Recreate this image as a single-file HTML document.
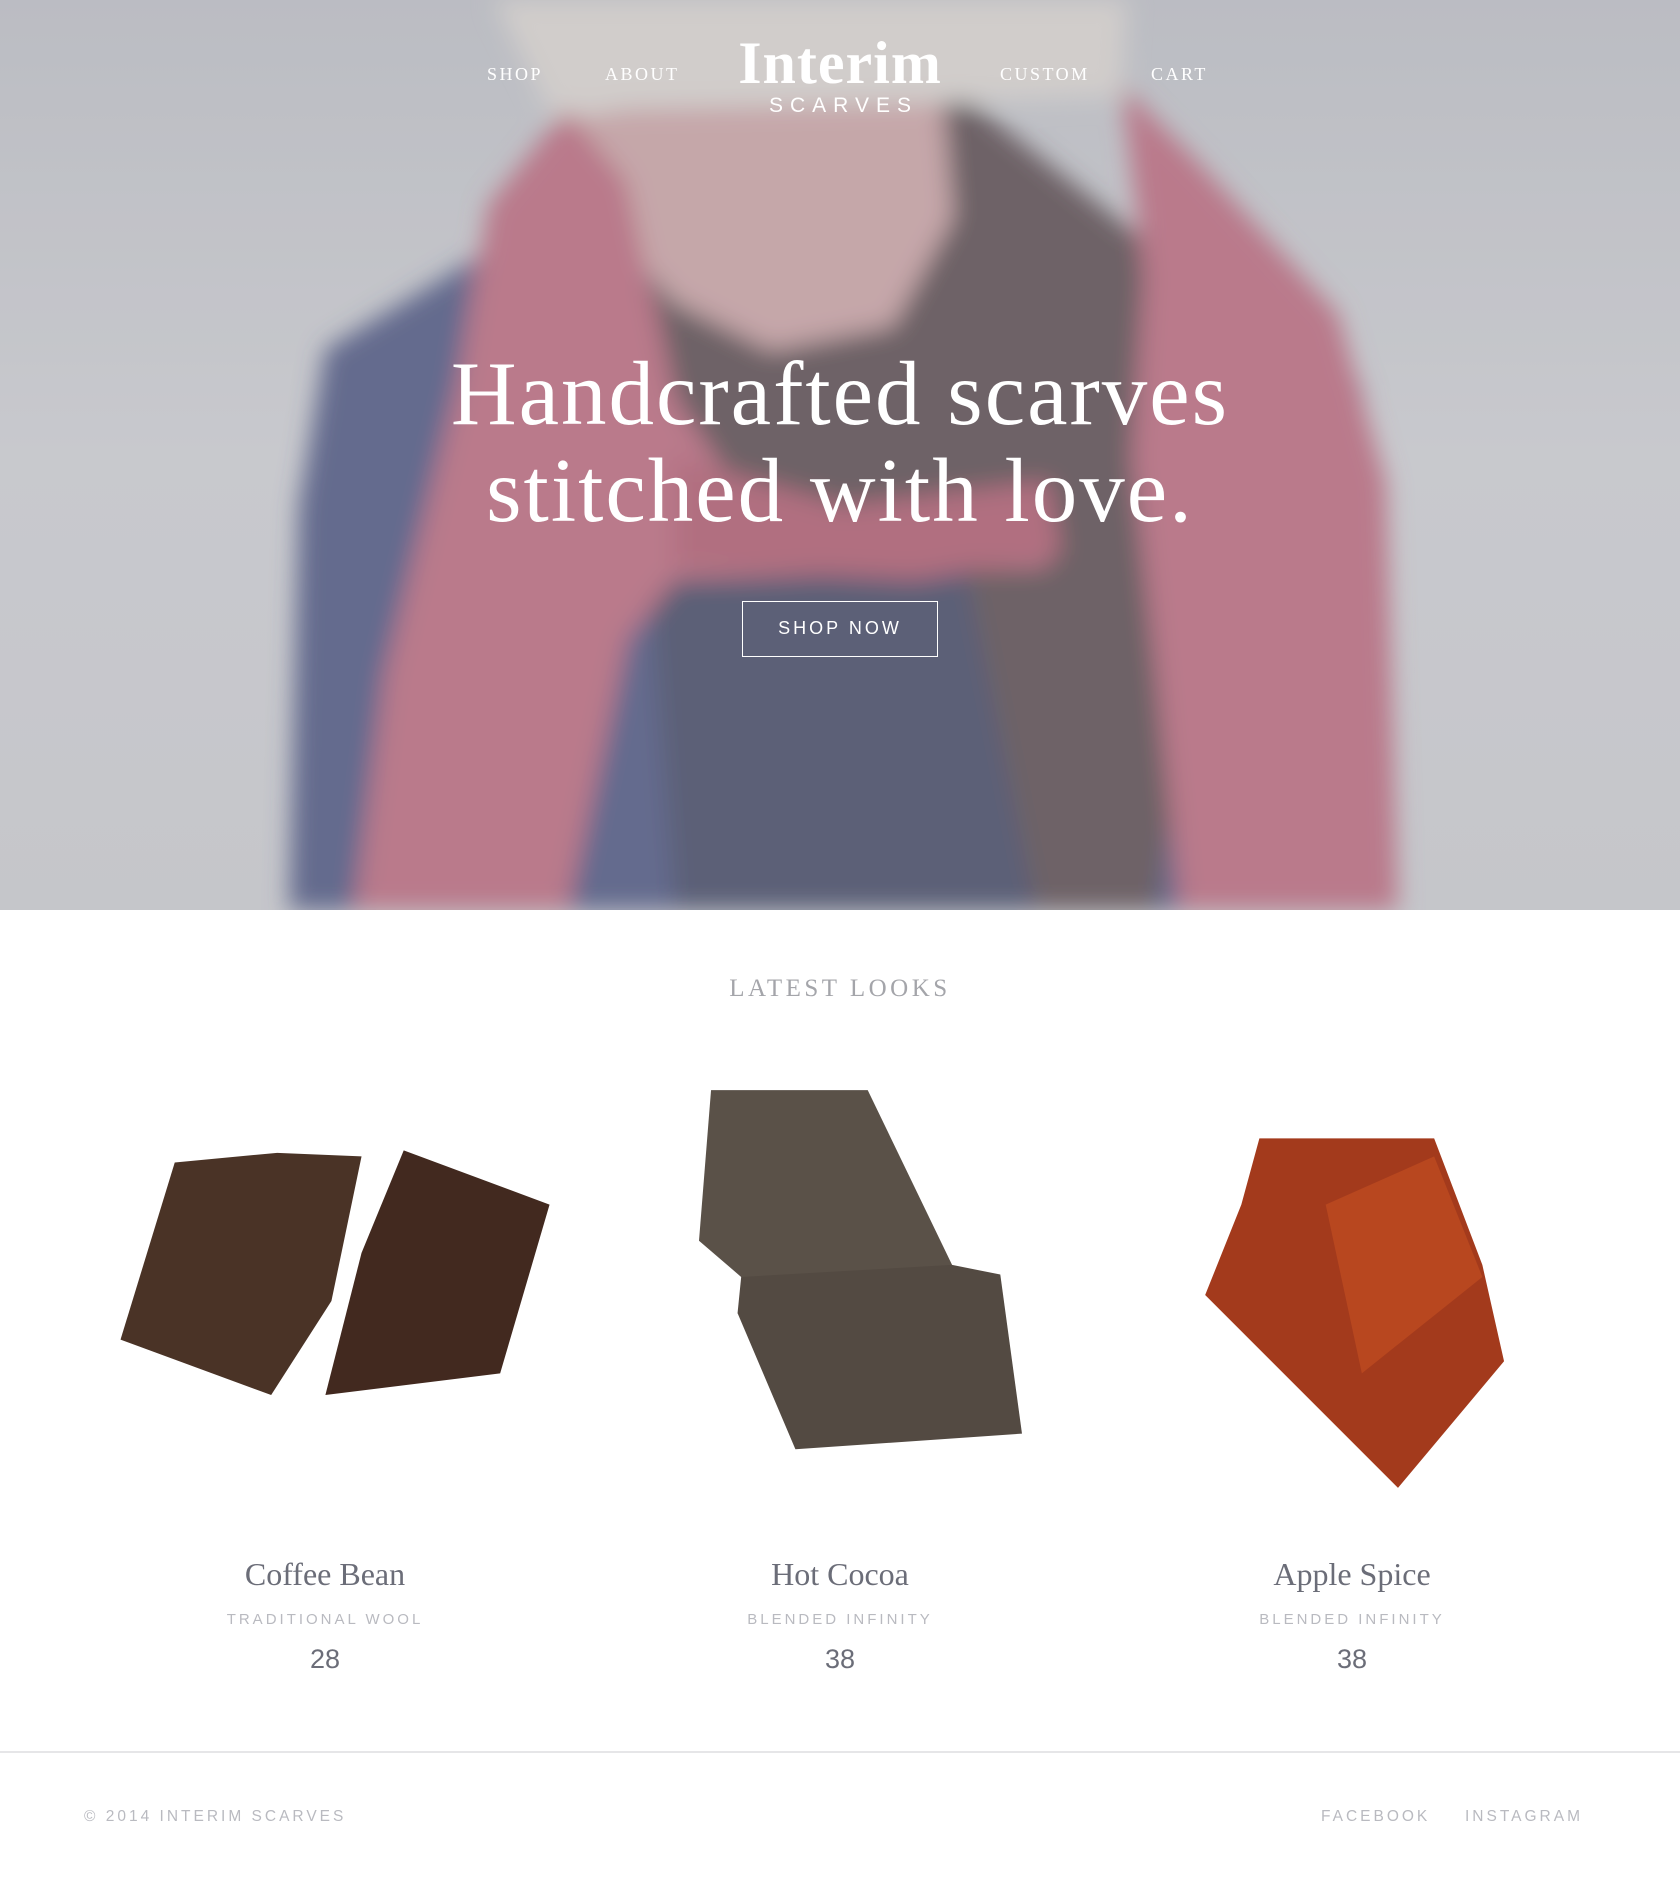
<!DOCTYPE html>
<html><head><meta charset="utf-8"><style>
*{margin:0;padding:0;box-sizing:border-box}
body{width:1680px;height:1890px;background:#fff;font-family:"Liberation Sans",sans-serif;position:relative;overflow:hidden}
.hero{position:absolute;left:0;top:0;width:1680px;height:910px;overflow:hidden;background:#c3c4c9}
.abs{position:absolute}
.nav{position:absolute;top:64px;color:#fff;font-family:"Liberation Serif",serif;font-size:18px;letter-spacing:2.5px}
.logo{position:absolute;left:0;width:1680px;text-align:center;color:#fff}
h1{position:absolute;left:0;width:1680px;top:345px;text-align:center;color:#fff;font-family:"Liberation Serif",serif;font-weight:normal;font-size:91px;line-height:97px;letter-spacing:2px}
.btn{position:absolute;left:742px;top:601px;width:196px;height:56px;border:1.5px solid #fff;color:#fff;font-size:18px;letter-spacing:3px;text-align:center;line-height:53px}
.ll{position:absolute;top:975px;width:1680px;text-align:center;font-family:"Liberation Serif",serif;font-size:25px;letter-spacing:3.5px;color:#a4a5aa}
.item{position:absolute;width:500px;text-align:center}
.item .t{font-family:"Liberation Serif",serif;font-size:32px;color:#6b6d78}
.item .s{font-size:15px;letter-spacing:3px;color:#b9bac0;margin-top:18px}
.item .p{font-size:27px;color:#6b6d78;margin-top:16px}
.foot{position:absolute;top:1808px;font-size:15.5px;letter-spacing:3px;color:#b9bac0}
</style></head><body>
<div class="hero">
<svg class="abs" style="left:0;top:0" width="1680" height="910" viewBox="0 0 1394 755">
<defs><filter id="b"><feGaussianBlur stdDeviation="10"/></filter>
<linearGradient id="bg" x1="0" y1="0" x2="0" y2="1"><stop offset="0" stop-color="#b6b8bf"/><stop offset="0.5" stop-color="#c8c9ce"/><stop offset="1" stop-color="#c4c5ca"/></linearGradient></defs>
<rect width="1394" height="755" fill="url(#bg)"/>
<g filter="url(#b)">
<polygon points="240,755 248,420 270,290 410,205 1000,240 1130,320 1160,755" fill="#3c4676"/>
<polygon points="560,400 880,380 960,600 940,755 560,755 540,500" fill="#303756"/>
<polygon points="520,90 800,80 950,200 1000,500 960,755 860,755 800,460 560,380" fill="#4b3b40"/>
<polygon points="470,80 780,70 790,180 740,270 640,290 560,250 480,160" fill="#c49a9c"/>
<polygon points="410,0 935,0 930,80 780,85 520,90 460,100" fill="#d4cfcb"/>
<polygon points="405,170 470,90 520,150 560,330 620,420 860,420 870,470 560,480 520,530 470,755 295,755 320,560 380,320" fill="#b45c72"/>
<polygon points="930,70 990,130 1110,260 1150,400 1160,755 980,755 960,560 940,380 950,230" fill="#b45c72"/>
<polygon points="560,380 700,420 870,400 880,460 760,480 560,470" fill="#a84e63"/>
</g>
<rect width="1394" height="755" fill="#c8c9ce" opacity="0.28"/>
</svg>
<div class="nav" style="left:487px">SHOP</div>
<div class="nav" style="left:605px">ABOUT</div>
<div class="nav" style="left:1000px">CUSTOM</div>
<div class="nav" style="left:1151px">CART</div>
<div class="logo" style="top:31px;font-family:'Liberation Serif',serif;font-size:60px;font-weight:bold;line-height:64px;letter-spacing:1px">Interim</div>
<div class="logo" style="top:94px;font-size:21px;letter-spacing:7px;padding-left:7px">SCARVES</div>
<h1>Handcrafted scarves<br>stitched with love.</h1>
<div class="btn">SHOP NOW</div>
</div>
<div class="ll">LATEST LOOKS</div>
<svg class="abs" style="left:0;top:1060px" width="1680" height="458" viewBox="0 880 1394 380">
<g>
<polygon points="145,965 230,957 300,960 275,1080 225,1158 100,1112" fill="#4a3326"/>
<polygon points="335,955 456,1000 415,1140 270,1158 300,1040" fill="#42291f"/>
<polygon points="590,905 720,905 790,1050 770,1075 615,1060 580,1030" fill="#5a5148"/>
<polygon points="615,1060 790,1050 830,1058 848,1190 660,1203 612,1090" fill="#534a42"/>
<polygon points="1045,945 1190,945 1230,1050 1248,1130 1160,1235 1000,1075 1030,1000" fill="#a33a1c"/>
<polygon points="1100,1000 1190,960 1230,1060 1130,1140" fill="#b8471f"/>
</g>
</svg>
<div class="item" style="left:75px;top:1556px"><div class="t">Coffee Bean</div><div class="s">TRADITIONAL WOOL</div><div class="p">28</div></div>
<div class="item" style="left:590px;top:1556px"><div class="t">Hot Cocoa</div><div class="s">BLENDED INFINITY</div><div class="p">38</div></div>
<div class="item" style="left:1102px;top:1556px"><div class="t">Apple Spice</div><div class="s">BLENDED INFINITY</div><div class="p">38</div></div>
<div class="abs" style="left:0;top:1751px;width:1680px;height:2px;background:#e6e6e8"></div>
<div class="foot" style="left:84px">© 2014 INTERIM SCARVES</div>
<div class="foot" style="left:1321px">FACEBOOK</div>
<div class="foot" style="left:1465px">INSTAGRAM</div>
</body></html>
